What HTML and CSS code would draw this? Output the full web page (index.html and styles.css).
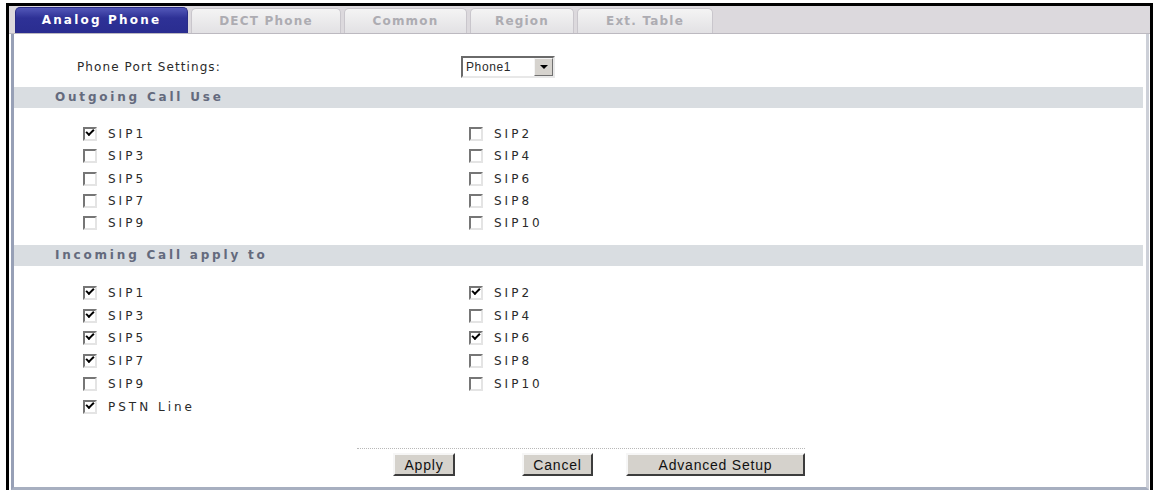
FILE: index.html
```html
<!DOCTYPE html>
<html lang="en">
<head>
    <meta charset="UTF-8">
    <title>Phone</title>
    <link rel="stylesheet" href="styles.css">
</head>
<body>
    <div class="frame">
        <div class="tabs">
            <div class="tab tab-active" style="width:173px">Analog Phone</div>
            <div class="tab" style="width:150px">DECT Phone</div>
            <div class="tab" style="width:123px">Common</div>
            <div class="tab" style="width:104px">Region</div>
            <div class="tab" style="width:136px">Ext. Table</div>
        </div>

        <div class="panel">
            <div class="port-row">
                <span class="port-label">Phone Port Settings:</span>
                <div class="combo">
                    <span class="combo-value">Phone1</span>
                    <span class="combo-btn"><span class="arrow"></span></span>
                </div>
            </div>

            <!-- Outgoing -->
            <div class="section-title">Outgoing Call Use</div>
            <div class="check-grid">
                <label class="check"><span class="box on"></span>SIP1</label>
                <label class="check"><span class="box"></span>SIP2</label>
                <label class="check"><span class="box"></span>SIP3</label>
                <label class="check"><span class="box"></span>SIP4</label>
                <label class="check"><span class="box"></span>SIP5</label>
                <label class="check"><span class="box"></span>SIP6</label>
                <label class="check"><span class="box"></span>SIP7</label>
                <label class="check"><span class="box"></span>SIP8</label>
                <label class="check"><span class="box"></span>SIP9</label>
                <label class="check"><span class="box"></span>SIP10</label>
            </div>

            <!-- Incoming -->
            <div class="section-title">Incoming Call apply to</div>
            <div class="check-grid incoming">
                <label class="check"><span class="box on"></span>SIP1</label>
                <label class="check"><span class="box on"></span>SIP2</label>
                <label class="check"><span class="box on"></span>SIP3</label>
                <label class="check"><span class="box"></span>SIP4</label>
                <label class="check"><span class="box on"></span>SIP5</label>
                <label class="check"><span class="box on"></span>SIP6</label>
                <label class="check"><span class="box on"></span>SIP7</label>
                <label class="check"><span class="box"></span>SIP8</label>
                <label class="check"><span class="box"></span>SIP9</label>
                <label class="check"><span class="box"></span>SIP10</label>
                <label class="check"><span class="box on"></span>PSTN Line</label>
            </div>

            <div class="buttons">
                <button class="btn btn-apply">Apply</button>
                <button class="btn btn-cancel">Cancel</button>
                <button class="btn btn-advanced">Advanced Setup</button>
            </div>
        </div>
    </div>
</body>
</html>
```

FILE: styles.css
```css
body {
    margin: 0;
    background-color: white;
    font-family: "DejaVu Sans", Verdana, sans-serif;
    color: #2a2a2a;
}
.frame {
    margin: 3px 0 0 6px;
    width: 1141px;
    border: 3px solid #000;
    border-bottom: none;
}
.tabs {
    display: flex;
    align-items: flex-end;
    gap: 3px;
    height: 27px;
    padding-left: 6px;
    background-color: #dcd9dd;
    border-bottom: 1px solid #bcb9c0;
}
.tab {
    height: 25px;
    box-sizing: border-box;
    border: 1px solid #c9c6cc;
    border-bottom: none;
    border-radius: 5px 5px 0 0;
    background: linear-gradient(#f4f4f4, #e2e1e4);
    color: #adacb2;
    font-weight: bold;
    font-size: 12px;
    letter-spacing: 1.2px;
    line-height: 24px;
    text-align: center;
}
.tab-active {
    height: 26px;
    border-color: #2a2c86;
    background: linear-gradient(#5257b8, #2e3196 40%, #2a2d90);
    color: white;
    letter-spacing: 2.2px;
}
.panel {
    height: 456px;
    margin-left: 2px;
    border-left: 3px solid #97a0b6;
    border-right: 3px solid #cdd0d8;
    border-bottom: 3px solid #a7afc0;
    box-sizing: border-box;
    width: 1138px;
    background-color: white;
}
.port-row {
    display: flex;
    align-items: center;
    height: 53px;
    padding-left: 63px;
    font-size: 12px;
    letter-spacing: 1.1px;
}
.port-label {
    width: 384px;
    padding-top: 12px;
}
.combo {
    display: flex;
    width: 94px;
    height: 22px;
    margin-top: 12px;
    box-sizing: border-box;
    border: 2px solid;
    border-color: #6a6a6a #e8e8e8 #e8e8e8 #6a6a6a;
    background-color: white;
}
.combo-value {
    flex: 1;
    padding-left: 3px;
    font-family: "Liberation Sans", Arial, sans-serif;
    font-size: 12px;
    letter-spacing: 0.6px;
    line-height: 18px;
}
.combo-btn {
    display: flex;
    align-items: center;
    justify-content: center;
    width: 17px;
    background-color: #d6d3ce;
    border: 1px solid;
    border-color: #f4f4f4 #707070 #707070 #f4f4f4;
}
.arrow {
    width: 0;
    height: 0;
    border-left: 4px solid transparent;
    border-right: 4px solid transparent;
    border-top: 4px solid #000;
}
.section-title {
    height: 21px;
    margin-right: 3px;
    padding-left: 41px;
    background-color: #d9dde1;
    color: #646a7d;
    font-size: 12px;
    font-weight: bold;
    letter-spacing: 2.8px;
    line-height: 21px;
}
.check-grid {
    display: grid;
    grid-template-columns: 386px 386px;
    grid-auto-rows: 22.3px;
    padding: 15px 0 11px 69px;
}
.check-grid.incoming {
    grid-auto-rows: 22.8px;
    padding-top: 15px;
    padding-bottom: 0;
}
.check {
    display: flex;
    align-items: center;
    font-size: 12px;
    letter-spacing: 3px;
}
.box {
    position: relative;
    width: 14px;
    height: 14px;
    margin-right: 11px;
    box-sizing: border-box;
    border: 2px solid;
    border-color: #767676 #e4e4e4 #e4e4e4 #767676;
    background-color: white;
}
.box.on::after {
    content: "";
    position: absolute;
    left: 1px;
    top: 0px;
    width: 6px;
    height: 3px;
    border-left: 2.5px solid #000;
    border-bottom: 2.5px solid #000;
    transform: rotate(-45deg);
}
.buttons {
    display: flex;
    width: 412px;
    margin: 30px 0 0 343px;
    padding: 4px 0 0 36px;
    border-top: 1px dotted #b8b8b8;
}
.btn {
    height: 23px;
    box-sizing: border-box;
    padding: 0;
    background-color: #d5d2cc;
    border: 2px solid;
    border-color: #f6f6f6 #3c3c3c #3c3c3c #f6f6f6;
    font-family: "Liberation Sans", Arial, sans-serif;
    font-size: 14px;
    letter-spacing: 0.8px;
    color: #111;
}
.btn-apply {
    width: 62px;
}
.btn-cancel {
    width: 71px;
    margin-left: 67px;
}
.btn-advanced {
    width: 179px;
    margin-left: 33px;
}
```
